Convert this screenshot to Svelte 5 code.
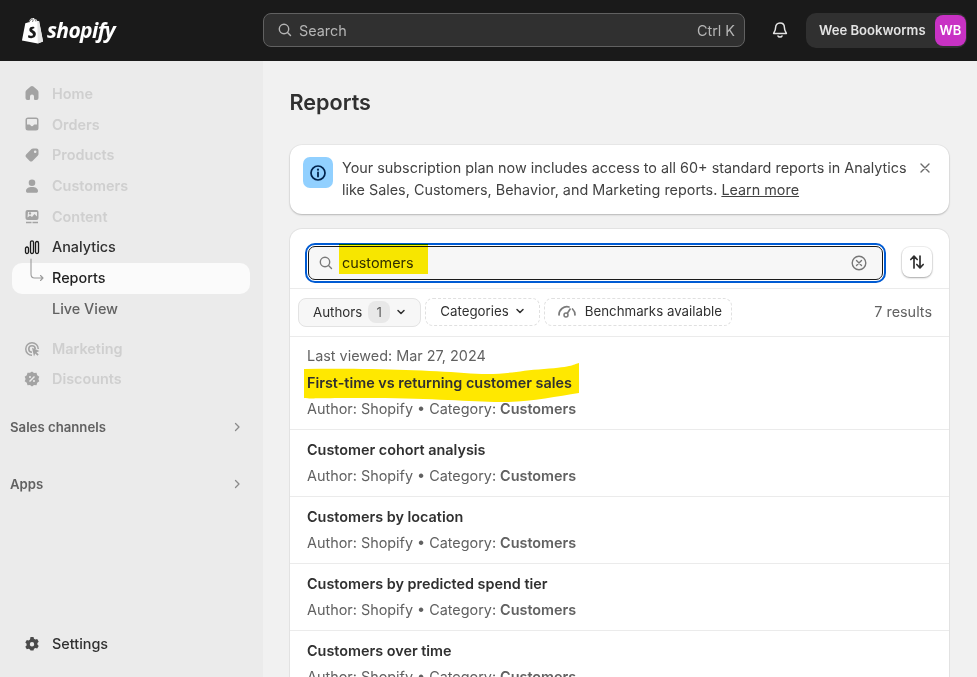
<script>
  const reports = [
    { title: 'First-time vs returning customer sales', last: 'Last viewed: Mar 27, 2024', marked: true },
    { title: 'Customer cohort analysis' },
    { title: 'Customers by location' },
    { title: 'Customers by predicted spend tier' },
    { title: 'Customers over time' }
  ];
</script>

{#snippet chevron()}
  <svg class="chev" viewBox="0 0 10 10" width="10" height="10"><path d="M2 3.500 5 6.500 8 3.500" fill="none" stroke="#303030" stroke-width="1.500" stroke-linecap="round" stroke-linejoin="round"/></svg>
{/snippet}

{#snippet side(label, d)}
  <div class="nav-row">
    <svg class="nav-icon" viewBox="0 0 16 16" width="16" height="16"><path d={d} fill-rule="evenodd" /></svg>
    <span>{label}</span>
  </div>
{/snippet}

<div class="page">
  <header class="topbar">
    <div class="brand">
      <svg viewBox="0 0 24 28" width="23" height="27" class="bag">
        <path d="M1 24.500 4.500 6.500 8 5.300C8.600 3 10.200 1 12.400 1c1 0 1.600.5 2 1.200l1.200-.3 1.500 2.300 1.600-.2L23 25.500 17.500 27.500Z" fill="#fff"/>
        <path d="M17 4.300 17.500 27.500 23 25.500 19 4Z" fill="#e4e4e4"/>
        <path d="M14 10.500c-1-.5-5.200-1-5.300 2.600 0 3 4 3.200 3.800 5.300-.1 1.600-2.600 1.500-4.600.2l-.7 2.500c3 1.700 8 1.200 8.300-3.100.2-3.500-3.800-3.700-3.800-5.200 0-1 1.600-1 2-.9Z" fill="#1a1a1a"/>
        <path d="M8.500 5.500C9 3.500 10.500 1.800 12.500 2M12 5c.3-1 .8-2 1.500-2.500M15 2.500c.4.600.5 1.200.5 2" fill="none" stroke="#1a1a1a" stroke-width=".7"/>
      </svg>
      <span class="wordmark">shopify</span>
    </div>
    <div class="global-search">
      <svg viewBox="0 0 16 16" width="16" height="16"><circle cx="7" cy="7" r="4.700" fill="none" stroke="#b5b5b5" stroke-width="1.400"/><path d="M10.500 10.500 13.500 13.500" stroke="#b5b5b5" stroke-width="1.400" stroke-linecap="round"/></svg>
      <span class="ph">Search</span>
      <span class="kbd">Ctrl K</span>
    </div>
    <svg class="bell" viewBox="0 0 18 18" width="18" height="18"><path d="M9 2C6.300 2 4.600 4 4.600 6.500c0 3.500-2 4.800-2 6h12.800c0-1.200-2-2.500-2-6C13.400 4 11.700 2 9 2Z" fill="none" stroke="#e3e3e3" stroke-width="1.500" stroke-linejoin="round"/><path d="M7 15c.4 1.300 3.600 1.300 4 0" fill="none" stroke="#e3e3e3" stroke-width="1.500" stroke-linecap="round"/></svg>
    <div class="store">
      <span>Wee Bookworms</span>
      <b class="avatar">WB</b>
    </div>
  </header>

  <div class="body">
    <aside class="sidebar">
      <div class="nav-group dim">
        {@render side('Home', 'M6.600 1.600a2.200 2.200 0 0 1 2.800 0l4 3.400c.7.600 1.100 1.400 1.100 2.300V13a2 2 0 0 1-2 2h-1.500a1 1 0 0 1-1-1v-2.500a2 2 0 0 0-4 0V14a1 1 0 0 1-1 1H3.500a2 2 0 0 1-2-2V7.300c0-.9.400-1.700 1.100-2.300Z')}
        {@render side('Orders', 'M4 1.500h8A2.500 2.500 0 0 1 14.500 4v8a2.500 2.500 0 0 1-2.500 2.500H4A2.500 2.500 0 0 1 1.500 12V4A2.500 2.500 0 0 1 4 1.500ZM3 8.500V4c0-.6.400-1 1-1h8c.6 0 1 .4 1 1v4.500h-2.500c-.5 0-.8.300-1 .7-.3.700-.9 1.100-1.500 1.100s-1.200-.4-1.500-1.100c-.2-.4-.5-.7-1-.7Z')}
        {@render side('Products', 'M9 1.500h3.500a2 2 0 0 1 2 2V7c0 .6-.2 1.100-.6 1.500l-5.400 5.400a2 2 0 0 1-2.800 0l-3.600-3.600a2 2 0 0 1 0-2.800l5.400-5.400C7.900 1.700 8.400 1.500 9 1.500Zm2.200 2a1.300 1.300 0 1 0 0 2.600 1.300 1.300 0 0 0 0-2.600Z')}
        {@render side('Customers', 'M8 1.500a3.300 3.300 0 1 1 0 6.600 3.300 3.300 0 0 1 0-6.600ZM2 13c0-2.500 2.500-4 6-4s6 1.500 6 4c0 1-.7 1.800-1.700 1.800H3.700C2.700 14.800 2 14 2 13Z')}
        {@render side('Content', 'M3.500 1h9A2 2 0 0 1 14.500 3v6a2 2 0 0 1-2 2h-9a2 2 0 0 1-2-2V3a2 2 0 0 1 2-2Zm0 7.500 2.500-2 2 1.500 2.500-3 2.500 2.500V3h-9ZM6 3.200a1.200 1.200 0 1 0 0 2.400 1.200 1.200 0 0 0 0-2.400ZM2 12.800h5.500v1.400H2Zm6.500 0H14v1.400H8.500Z')}
      </div>
      <div class="nav-row lift">
        <svg class="nav-icon" viewBox="0 0 16 16" width="16" height="16"><g fill="none" stroke="#1a1a1a" stroke-width="1.300"><rect x="1.500" y="8" width="3" height="6.500" rx="1.500"/><rect x="6.500" y="1.800" width="3" height="12.700" rx="1.500"/><rect x="11.500" y="2.500" width="3" height="12" rx="1.500"/></g></svg>
        <span>Analytics</span>
      </div>
      <div class="nav-row lift current">
        <svg class="elbow" viewBox="0 0 16 24" width="16" height="24"><path d="M1 1v15c0 2.500 1 4 3.500 4H13M10.500 17.500 13 20l-2.500 2.500" fill="none" stroke="#9c9c9c" stroke-width="1.100" stroke-linecap="round" stroke-linejoin="round"/></svg>
        <span>Reports</span>
      </div>
      <div class="nav-row lift sub"><span>Live View</span></div>
      <div class="nav-group dim second">
        {@render side('Marketing', 'M8 1a7 7 0 0 1 7 7h-1.500A5.500 5.500 0 1 0 8 13.500V15A7 7 0 0 1 8 1Zm0 3a4 4 0 0 1 4 4h-1.600A2.400 2.400 0 1 0 8 10.400V12a4 4 0 0 1 0-8Zm0 2.700L15.500 10l-3 1.200 2.200 2.300-1.200 1.200-2.300-2.200-1.200 3Z')}
        {@render side('Discounts', 'M8 .5l2 1.500 2.500-.2.700 2.400 2.100 1.500-.9 2.300.9 2.300-2.100 1.500-.7 2.400-2.500-.2L8 15.500 6 14l-2.500.2-.7-2.400L.7 10.300l.9-2.300-.9-2.300 2.100-1.500.7-2.400L6 1.700Zm2 4.400-5 5 1 1 5-5ZM6 5a1 1 0 1 0 0 2 1 1 0 0 0 0-2Zm4 4a1 1 0 1 0 0 2 1 1 0 0 0 0-2Z')}
      </div>
      <div class="section first"><span>Sales channels</span><svg viewBox="0 0 10 10" width="10" height="10"><path d="M3.500 1.500 7 5 3.500 8.500" fill="none" stroke="#8a8a8a" stroke-width="1.300" stroke-linecap="round" stroke-linejoin="round"/></svg></div>
      <div class="section"><span>Apps</span><svg viewBox="0 0 10 10" width="10" height="10"><path d="M3.500 1.500 7 5 3.500 8.500" fill="none" stroke="#8a8a8a" stroke-width="1.300" stroke-linecap="round" stroke-linejoin="round"/></svg></div>
      <div class="settings">
        {@render side('Settings', 'M6.500 1h3l.5 1.800 1.400.8 1.800-.5 1.500 2.600-1.300 1.300v1.600l1.300 1.300-1.500 2.600-1.800-.5-1.400.8-.5 1.800h-3L6 13.600l-1.400-.8-1.800.5-1.500-2.600 1.300-1.300V7.800L1.300 6.500l1.500-2.600 1.800.5L6 3.600ZM8 6a2.200 2.200 0 1 0 0 4.400A2.200 2.200 0 0 0 8 6Z')}
      </div>
    </aside>

    <main class="main">
      <h1>Reports</h1>

      <section class="banner">
        <div class="info">
          <svg viewBox="0 0 20 20" width="20" height="20"><circle cx="10" cy="10" r="7" fill="none" stroke="#00224d" stroke-width="1.700"/><circle cx="10" cy="6.700" r="1.100" fill="#00224d"/><path d="M10 9.500v4" stroke="#00224d" stroke-width="1.800" stroke-linecap="round"/></svg>
        </div>
        <p>Your subscription plan now includes access to all 60+ standard reports in Analytics like Sales, Customers, Behavior, and Marketing reports. <a href="/">Learn more</a></p>
        <svg class="close" viewBox="0 0 12 12" width="12" height="12"><path d="M2 2l8 8M10 2l-8 8" stroke="#6b6b6b" stroke-width="1.400" stroke-linecap="round"/></svg>
      </section>

      <section class="card">
        <div class="search-row">
          <div class="search-field">
            <svg viewBox="0 0 16 16" width="16" height="16"><circle cx="7" cy="7" r="4.700" fill="none" stroke="#7a7a7a" stroke-width="1.400"/><path d="M10.500 10.500 13.500 13.500" stroke="#7a7a7a" stroke-width="1.400" stroke-linecap="round"/></svg>
            <span class="query">customers<i class="mark-query"></i></span>
            <svg class="clear" viewBox="0 0 16 16" width="16" height="16"><circle cx="8" cy="8" r="6.800" fill="none" stroke="#777" stroke-width="1.400"/><path d="M5.500 5.500l5 5M10.500 5.500l-5 5" stroke="#777" stroke-width="1.400" stroke-linecap="round"/></svg>
          </div>
          <div class="sort">
            <svg viewBox="0 0 18 18" width="18" height="18"><path d="M6 15V3.500M2.800 6.500 6 3.200l3.200 3.300M12 3v11.500M8.800 11.500l3.200 3.300 3.200-3.300" fill="none" stroke="#303030" stroke-width="1.700" stroke-linecap="round" stroke-linejoin="round"/></svg>
          </div>
        </div>

        <div class="filters">
          <div class="pill solid">Authors <em>1</em>{@render chevron()}</div>
          <div class="pill">Categories {@render chevron()}</div>
          <div class="pill bench">
            <svg viewBox="0 0 20 14" width="20" height="14"><path d="M2 11a8 8 0 0 1 10-8M15.500 5a8 8 0 0 1 2.500 6" fill="none" stroke="#7a7a7a" stroke-width="1.700" stroke-linecap="round"/><circle cx="9" cy="11" r="2" fill="none" stroke="#7a7a7a" stroke-width="1.500"/><path d="M10.200 9.500 13.500 4.500" stroke="#7a7a7a" stroke-width="1.600"/></svg>
            Benchmarks available
          </div>
          <span class="count">7 results</span>
        </div>

        {#each reports as r}
          <article class="report">
            {#if r.last}<div class="meta last">{r.last}</div>{/if}
            <div class="title">
              {#if r.marked}
                <svg class="mark-title" viewBox="0 0 276 40" width="276" height="40"><path d="M0 6C60 5 120 7 160 10S210 8 240 6 270 1 275 0V30C250 34 220 40 190 39S120 35 60 35 10 36 0 35Z" fill="#ffe800"/></svg>
              {/if}
              <span>{r.title}</span>
            </div>
            <div class="meta">Author: Shopify • Category: <b>Customers</b></div>
          </article>
        {/each}
      </section>
    </main>
  </div>
</div>

<style>
  :global(body) {
    margin: 0;
    background: #f1f1f1;
    font-family: Inter, "Liberation Sans", sans-serif;
    overflow: hidden;
  }

  .page {
    height: 677px;
    overflow: hidden;
    display: flex;
    flex-direction: column;
    color: #303030;
  }

  .topbar {
    height: 61px;
    flex: none;
    background: #1a1a1a;
    display: flex;
    align-items: center;
    box-sizing: border-box;
    padding: 0 0 1px 21px;
  }
  .brand { width: 242px; display: flex; align-items: center; gap: 3px; }
  .wordmark {
    font: italic 700 21px "Open Sans", sans-serif;
    color: #fff;
    letter-spacing: -0.6px;
  }
  .global-search {
    width: 482px;
    height: 34px;
    box-sizing: border-box;
    background: #303030;
    border: 1px solid #616161;
    border-radius: 8px;
    display: flex;
    align-items: center;
    gap: 6px;
    padding: 0 9px 0 13px;
    font-size: 14.4px;
    color: #b5b5b5;
  }
  .kbd { margin-left: auto; }
  .bell { margin-left: 26px; }
  .store {
    margin-left: 17px;
    width: 161px;
    height: 35px;
    box-sizing: border-box;
    background: #303030;
    border-radius: 10px;
    display: flex;
    align-items: center;
    justify-content: space-between;
    padding: 0 1px 0 13px;
    color: #e3e3e3;
    font-size: 13.1px;
    font-weight: 600;
  }
  .avatar {
    width: 31px;
    height: 31px;
    border-radius: 8px;
    background: #c832c4;
    color: #fff;
    display: flex;
    align-items: center;
    justify-content: center;
    font-size: 13px;
    font-weight: 600;
  }

  .body { flex: 1; display: flex; min-height: 0; }

  .sidebar {
    width: 263px;
    flex: none;
    background: #ebebeb;
    box-sizing: border-box;
    padding-top: 17px;
    display: flex;
    flex-direction: column;
  }
  .nav-row {
    position: relative;
    height: 31px;
    box-sizing: border-box;
    display: flex;
    align-items: center;
    gap: 12px;
    padding-left: 24px;
    margin-right: 13px;
    font-size: 14.4px;
    font-weight: 500;
    color: #303030;
  }
  .lift { padding-bottom: 1px; }
  .nav-icon { flex: none; fill: #a3a3a3; }
  .dim .nav-row { height: 30.8px; color: #cfcfcf; font-weight: 600; }
  .settings .nav-row { color: #303030; font-weight: 500; }
  .settings .nav-icon { fill: #4a4a4a; }
  .current {
    margin-left: 12px;
    padding-left: 40px;
    background: #fbfbfb;
    border-radius: 10px;
    color: #1f1f1f;
  }
  .elbow { position: absolute; left: 18px; top: -5px; }
  .sub { padding-left: 52px; color: #616161; }
  .second { margin-top: 9px; }
  .dim.second .nav-row { height: 30px; }
  .section {
    display: flex;
    align-items: center;
    justify-content: space-between;
    padding: 0 21px 0 10px;
    height: 20px;
    margin-top: 37px;
    font-size: 13.2px;
    font-weight: 600;
    color: #616161;
  }
  .section.first { margin-top: 23px; }
  .settings { margin-top: auto; margin-bottom: 18px; }

  .main {
    flex: 1;
    min-width: 0;
    padding: 26px 28px 0 27px;
    box-sizing: border-box;
  }
  h1 {
    margin: 0 0 28px -0.5px;
    font-size: 21.6px;
    line-height: 30px;
    font-weight: 600;
    color: #303030;
  }
  .banner {
    position: relative;
    background: #fff;
    border-radius: 12px;
    box-shadow: 0 1px 2px rgba(0, 0, 0, .22), 0 0 0 1px rgba(0, 0, 0, .03);
    display: flex;
    align-items: flex-start;
    gap: 9px;
    height: 69px;
    box-sizing: border-box;
    padding: 12px 13px;
    margin-bottom: 15px;
  }
  .info {
    width: 30px;
    height: 31px;
    flex: none;
    border-radius: 7px;
    background: #91d0ff;
    display: flex;
    align-items: center;
    justify-content: center;
  }
  .banner p {
    margin: 0;
    width: 575px;
    font-size: 14.38px;
    line-height: 22px;
    color: #424242;
  }
  .banner a { color: #424242; }
  .close { position: absolute; right: 18px; top: 17px; }

  .card {
    background: #fff;
    border-radius: 12px 12px 0 0;
    box-shadow: 0 0 0 1px rgba(0, 0, 0, .06);
  }
  .search-row {
    height: 60px;
    box-sizing: border-box;
    padding: 17px 17px 0 18px;
    display: flex;
    gap: 19px;
    border-bottom: 1px solid #ebebeb;
  }
  .search-field {
    width: 575px;
    height: 34px;
    box-sizing: border-box;
    background: #f7f7f7;
    border: 1px solid #1a1a1a;
    outline: 2px solid #005bd3;
    outline-offset: 1px;
    border-radius: 7px;
    display: flex;
    align-items: center;
    gap: 8px;
    padding: 0 15px 0 9px;
    font-size: 14.4px;
    color: #303030;
  }
  .query { position: relative; margin-bottom: 2px; }
  .mark-query {
    position: absolute;
    left: -3px;
    top: -10px;
    width: 89px;
    height: 30px;
    background: #ffee00;
    mix-blend-mode: multiply;
  }
  .clear { margin-left: auto; }
  .sort {
    width: 30px;
    height: 30px;
    flex: none;
    box-sizing: border-box;
    border-radius: 8px;
    background: #fff;
    box-shadow: 0 1px 2px rgba(0, 0, 0, .3), 0 0 0 1px rgba(0, 0, 0, .06);
    display: flex;
    align-items: center;
    justify-content: center;
    margin-top: 1px;
  }

  .filters {
    height: 48px;
    box-sizing: border-box;
    display: flex;
    align-items: center;
    gap: 4px;
    padding: 0 17px 2px 8px;
    border-bottom: 1px solid #ebebeb;
    font-size: 13.3px;
    color: #303030;
  }
  .pill {
    height: 28px;
    box-sizing: border-box;
    display: flex;
    align-items: center;
    gap: 6px;
    padding: 0 14px 1px;
    border: 1px dashed #e0e0e0;
    border-radius: 8px;
  }
  .pill.solid {
    border: 1px solid #e3e3e3;
    background: #f7f7f7;
    height: 29px;
    margin-top: 1px;
    padding-bottom: 0;
  }
  .pill em {
    font-style: normal;
    width: 22px;
    height: 22px;
    border-radius: 8px;
    background: #e8e8e8;
    display: flex;
    align-items: center;
    justify-content: center;
    color: #616161;
  }
  .bench { gap: 8px; padding: 0 9px 1px 12px; }
  .count { margin-left: auto; font-size: 14.4px; color: #616161; }

  .report {
    padding: 7px 17px;
    border-bottom: 1px solid #ebebeb;
    font-size: 14.4px;
  }
  .meta { color: #616161; line-height: 26px; }
  .meta.last { margin: -1px 0 1px; }
  .meta b { font-weight: 600; }
  .title { position: relative; font-weight: 600; color: #303030; line-height: 26px; }
  .title span { position: relative; }
  .mark-title { position: absolute; left: -3px; top: -7px; }
</style>
